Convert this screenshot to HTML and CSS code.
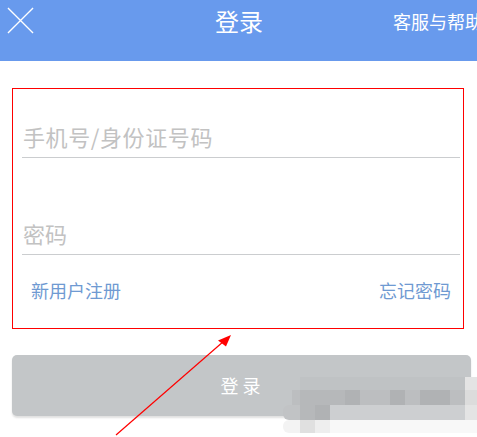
FILE: index.html
```html
<!DOCTYPE html>
<html lang="zh-CN">
<head>
<meta charset="utf-8">
<title>登录</title>
<link rel="stylesheet" href="styles.css">
</head>
<body>
<div class="page">
  <header class="topbar">
    <span class="close" aria-label="关闭">
      <svg width="28" height="28" viewBox="0 0 28 28"><path d="M1 1 L27 27 M27 1 L1 27" stroke="#fff" stroke-width="1.4" fill="none"/></svg>
    </span>
    <h1 class="title">登录</h1>
    <span class="help">客服与帮助</span>
  </header>

  <main class="content">
    <section class="login-box">
      <div class="field field-first"><span class="placeholder">手机号/身份证号码</span></div>
      <div class="field field-second"><span class="placeholder">密码</span></div>
      <div class="links">
        <a class="link">新用户注册</a>
        <a class="link">忘记密码</a>
      </div>
    </section>
    <button class="login-btn">登录</button>
  </main>

  <div class="mosaic">
    <span></span><span></span><span class="c1"></span><span class="c1"></span><span class="c1"></span><span class="c1"></span><span class="c1"></span><span class="c1"></span><span class="c1"></span><span class="c1"></span><span class="c1"></span><span class="c1"></span><span class="c1"></span><span class="c9"></span>
    <span></span><span class="c2"></span><span class="c3"></span><span class="c3"></span><span class="c3"></span><span class="c4"></span><span class="c2"></span><span class="c2"></span><span class="c4"></span><span class="c2"></span><span class="c4"></span><span class="c4"></span><span class="c2"></span><span class="c8"></span>
    <span class="c5 rl"></span><span class="c5"></span><span class="c3"></span><span class="c4"></span><span class="c6"></span><span class="c6"></span><span class="c6"></span><span class="c6"></span><span class="c6"></span><span class="c6"></span><span class="c6"></span><span class="c6"></span><span class="c6"></span><span class="c9"></span>
    <span class="c10 rl"></span><span class="c10"></span><span class="c11"></span><span class="c12"></span><span class="c13"></span><span class="c13"></span><span class="c13"></span><span class="c13"></span><span class="c13"></span><span class="c13"></span><span class="c13"></span><span class="c13"></span><span class="c13"></span><span class="c13"></span>
  </div>

  <svg class="arrow" width="477" height="437" viewBox="0 0 477 437">
    <line x1="116" y1="435" x2="224" y2="341" stroke="#f00" stroke-width="1.2"/>
    <polygon points="231,335 218,340.5 226,346.5" fill="#f00"/>
  </svg>
</div>
</body>
</html>
```

FILE: styles.css
```css
* { box-sizing: border-box; }
html, body { margin: 0; padding: 0; }
body {
  background: #fff;
  font-family: "Noto Sans CJK SC", "Noto Sans", sans-serif;
  width: 477px;
  height: 437px;
  overflow: hidden;
}
.page { position: relative; width: 477px; height: 437px; }

.topbar {
  height: 61px;
  background: #689aed;
  display: grid;
  grid-template-columns: 1fr auto 1fr;
  align-items: start;
  overflow: hidden;
  color: #fff;
}
.close {
  display: flex;
  padding: 7px 0 0 7px;
  height: 43px;
}
.close svg { display: block; width: 27px; height: 27px; }
.title {
  margin: 0;
  font-size: 24px;
  font-weight: 400;
  line-height: 41px;
  height: 43px;
  padding-left: 1px;
}
.help {
  justify-self: end;
  white-space: nowrap;
  font-size: 18px;
  line-height: 42px;
  margin-right: -6px;
}

.content { display: flex; flex-direction: column; }

.login-box {
  margin: 27px 13px 0 12px;
  border: 1px solid #ff0000;
  padding: 0 3px 26px 9px;
  display: flex;
  flex-direction: column;
}
.field {
  height: 69px;
  border-bottom: 1px solid #cbcdcf;
  display: flex;
  align-items: flex-end;
  padding-bottom: 8px;
  padding-left: 1px;
}
.field-second { margin-top: 28px; }
.placeholder {
  font-size: 22px;
  line-height: 26px;
  color: #c2c2c2;
}
.field-first .placeholder { letter-spacing: 0.6px; }
.links {
  margin-top: 23px;
  padding: 0 9px;
  display: flex;
  justify-content: space-between;
}
.link {
  font-size: 18px;
  line-height: 24px;
  color: #6f9ad2;
}

.login-btn {
  margin: 26px 6px 0 12px;
  height: 61px;
  border: 0;
  border-radius: 5px;
  background: #c3c6c8;
  box-shadow: 0 2px 2px rgba(0,0,0,0.12);
  color: #fff;
  font-family: "Noto Sans CJK SC", "Noto Sans", sans-serif;
  font-size: 18px;
  letter-spacing: 4px;
  padding: 0 0 2px 2px;
}

.mosaic {
  position: absolute;
  left: 283px;
  top: 377px;
  display: grid;
  grid-template-columns: 9px 8px repeat(11, 15px) 12px;
  grid-template-rows: 13px 15px 15px 13px;
}
.mosaic .c1 { background: #bfc2c4; }
.mosaic .c2 { background: #bcbec0; }
.mosaic .c3 { background: #b6b8ba; }
.mosaic .c4 { background: #b0b2b4; }
.mosaic .c5 { background: #c1c3c5; }
.mosaic .c6 { background: #cdcfd1; }
.mosaic .c8 { background: #dcdcdc; }
.mosaic .c9 { background: #e4e4e4; }
.mosaic .c10 { background: #f3f3f3; }
.mosaic .c11 { background: #e0e0e0; }
.mosaic .c12 { background: #eeeeee; }
.mosaic .c13 { background: #f8f8f8; }
.mosaic .rl { border-radius: 6px 0 0 6px; }

.arrow {
  position: absolute;
  left: 0;
  top: 0;
  pointer-events: none;
}
```
